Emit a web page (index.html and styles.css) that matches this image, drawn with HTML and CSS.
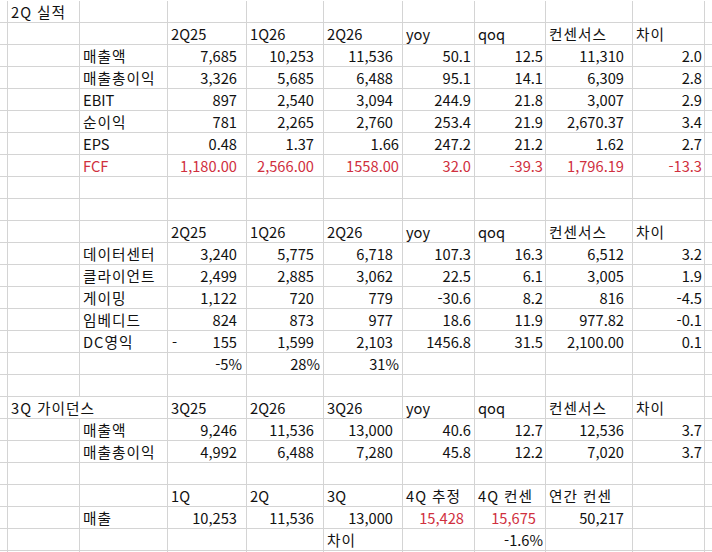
FILE: index.html
```html
<!DOCTYPE html>
<html lang="ko">
<head>
<meta charset="utf-8">
<title>2Q 실적</title>
<link rel="stylesheet" href="styles.css">
</head>
<body>
<div class="sheet">
  <!-- row 1 -->
  <div></div><div class="t k">2Q 실적</div><div></div><div></div><div></div><div></div><div></div><div></div><div></div><div></div><div></div>
  <!-- row 2 -->
  <div></div><div></div><div></div><div class="t">2Q25</div><div class="t">1Q26</div><div class="t">2Q26</div><div class="t">yoy</div><div class="t">qoq</div><div class="t k">컨센서스</div><div class="t k">차이</div><div></div>
  <!-- row 3 -->
  <div></div><div></div><div class="t k">매출액</div><div class="n p9">7,685</div><div class="n p9">10,253</div><div class="n p9">11,536</div><div class="n p3">50.1</div><div class="n p2">12.5</div><div class="n p8">11,310</div><div class="n p2">2.0</div><div></div>
  <!-- row 4 -->
  <div></div><div></div><div class="t k">매출총이익</div><div class="n p9">3,326</div><div class="n p9">5,685</div><div class="n p9">6,488</div><div class="n p3">95.1</div><div class="n p2">14.1</div><div class="n p8">6,309</div><div class="n p2">2.8</div><div></div>
  <!-- row 5 -->
  <div></div><div></div><div class="t">EBIT</div><div class="n p9">897</div><div class="n p9">2,540</div><div class="n p9">3,094</div><div class="n p3">244.9</div><div class="n p2">21.8</div><div class="n p8">3,007</div><div class="n p2">2.9</div><div></div>
  <!-- row 6 -->
  <div></div><div></div><div class="t k">순이익</div><div class="n p9">781</div><div class="n p9">2,265</div><div class="n p9">2,760</div><div class="n p3">253.4</div><div class="n p2">21.9</div><div class="n p8">2,670.37</div><div class="n p2">3.4</div><div></div>
  <!-- row 7 -->
  <div></div><div></div><div class="t">EPS</div><div class="n p9">0.48</div><div class="n p9">1.37</div><div class="n p3">1.66</div><div class="n p3">247.2</div><div class="n p2">21.2</div><div class="n p8">1.62</div><div class="n p2">2.7</div><div></div>
  <!-- row 8 -->
  <div></div><div></div><div class="t red">FCF</div><div class="n p9 red">1,180.00</div><div class="n p9 red">2,566.00</div><div class="n p3 red">1558.00</div><div class="n p3 red">32.0</div><div class="n p2 red">-39.3</div><div class="n p8 red">1,796.19</div><div class="n p2 red">-13.3</div><div></div>
  <!-- row 9 -->
  <div></div><div></div><div></div><div></div><div></div><div></div><div></div><div></div><div></div><div></div><div></div>
  <!-- row 10 -->
  <div></div><div></div><div></div><div></div><div></div><div></div><div></div><div></div><div></div><div></div><div></div>
  <!-- row 11 -->
  <div></div><div></div><div></div><div class="t">2Q25</div><div class="t">1Q26</div><div class="t">2Q26</div><div class="t">yoy</div><div class="t">qoq</div><div class="t k">컨센서스</div><div class="t k">차이</div><div></div>
  <!-- row 12 -->
  <div></div><div></div><div class="t k">데이터센터</div><div class="n p9">3,240</div><div class="n p9">5,775</div><div class="n p9">6,718</div><div class="n p3">107.3</div><div class="n p2">16.3</div><div class="n p8">6,512</div><div class="n p2">3.2</div><div></div>
  <!-- row 13 -->
  <div></div><div></div><div class="t k">클라이언트</div><div class="n p9">2,499</div><div class="n p9">2,885</div><div class="n p9">3,062</div><div class="n p3">22.5</div><div class="n p2">6.1</div><div class="n p8">3,005</div><div class="n p2">1.9</div><div></div>
  <!-- row 14 -->
  <div></div><div></div><div class="t k">게이밍</div><div class="n p9">1,122</div><div class="n p9">720</div><div class="n p9">779</div><div class="n p3">-30.6</div><div class="n p2">8.2</div><div class="n p8">816</div><div class="n p2">-4.5</div><div></div>
  <!-- row 15 -->
  <div></div><div></div><div class="t k">임베디드</div><div class="n p9">824</div><div class="n p9">873</div><div class="n p9">977</div><div class="n p3">18.6</div><div class="n p2">11.9</div><div class="n p8">977.82</div><div class="n p2">-0.1</div><div></div>
  <!-- row 16 -->
  <div></div><div></div><div class="t k">DC영익</div><div class="n p9 acct"><span>-</span><span>155</span></div><div class="n p9">1,599</div><div class="n p9">2,103</div><div class="n p3">1456.8</div><div class="n p2">31.5</div><div class="n p8">2,100.00</div><div class="n p2">0.1</div><div></div>
  <!-- row 17 -->
  <div></div><div></div><div></div><div class="n p4">-5%</div><div class="n p3">28%</div><div class="n p3">31%</div><div></div><div></div><div></div><div></div><div></div>
  <!-- row 18 -->
  <div></div><div></div><div></div><div></div><div></div><div></div><div></div><div></div><div></div><div></div><div></div>
  <!-- row 19 -->
  <div></div><div class="t k span2">3Q 가이던스</div><div class="t">3Q25</div><div class="t">2Q26</div><div class="t">3Q26</div><div class="t">yoy</div><div class="t">qoq</div><div class="t k">컨센서스</div><div class="t k">차이</div><div></div>
  <!-- row 20 -->
  <div></div><div></div><div class="t k">매출액</div><div class="n p9">9,246</div><div class="n p9">11,536</div><div class="n p9">13,000</div><div class="n p3">40.6</div><div class="n p2">12.7</div><div class="n p8">12,536</div><div class="n p2">3.7</div><div></div>
  <!-- row 21 -->
  <div></div><div></div><div class="t k">매출총이익</div><div class="n p9">4,992</div><div class="n p9">6,488</div><div class="n p9">7,280</div><div class="n p3">45.8</div><div class="n p2">12.2</div><div class="n p8">7,020</div><div class="n p2">3.7</div><div></div>
  <!-- row 22 -->
  <div></div><div></div><div></div><div></div><div></div><div></div><div></div><div></div><div></div><div></div><div></div>
  <!-- row 23 -->
  <div></div><div></div><div></div><div class="t">1Q</div><div class="t">2Q</div><div class="t">3Q</div><div class="t k">4Q 추정</div><div class="t k">4Q 컨센</div><div class="t k">연간 컨센</div><div></div><div></div>
  <!-- row 24 -->
  <div></div><div></div><div class="t k">매출</div><div class="n p9">10,253</div><div class="n p9">11,536</div><div class="n p9">13,000</div><div class="n p10 red">15,428</div><div class="n p9 red">15,675</div><div class="n p8">50,217</div><div></div><div></div>
  <!-- row 25 -->
  <div></div><div></div><div></div><div></div><div></div><div class="t k">차이</div><div></div><div class="n p2">-1.6%</div><div></div><div></div><div></div>
  <!-- row 26 -->
  <div></div><div></div><div></div><div></div><div></div><div></div><div></div><div></div><div></div><div></div><div></div>
</div>
</body>
</html>
```
FILE: styles.css
```css
html, body {
  margin: 0;
  padding: 0;
  background: #ffffff;
  overflow: hidden;
}

body {
  width: 712px;
  height: 552px;
  font-family: "Noto Sans CJK KR", "Noto Sans", sans-serif;
  font-size: 14.67px;
  color: #111111;
}

.sheet {
  display: grid;
  grid-template-columns: 8px 72px 88px 79px 77px 79px 72px 71px 87px 72px 8px;
  grid-auto-rows: 22px;
  padding-top: 1px;
  width: 713px;
}

.sheet > div {
  box-sizing: border-box;
  border-right: 1px solid #d4d4d4;
  border-bottom: 1px solid #d4d4d4;
  line-height: 21px;
  white-space: nowrap;
  overflow: visible;
  min-width: 0;
}

.t {
  padding-left: 3px;
  text-align: left;
}

.k {
  letter-spacing: 1px;
}

.n {
  text-align: right;
}

.p2 { padding-right: 2px; }
.p3 { padding-right: 3px; }
.p4 { padding-right: 4px; }
.p8 { padding-right: 8px; }
.p9 { padding-right: 9px; }
.p10 { padding-right: 10px; }

.acct {
  display: flex;
  justify-content: space-between;
  padding-left: 4px;
}

.span2 {
  grid-column: span 2;
}

.red {
  color: #d0303e;
}
```
